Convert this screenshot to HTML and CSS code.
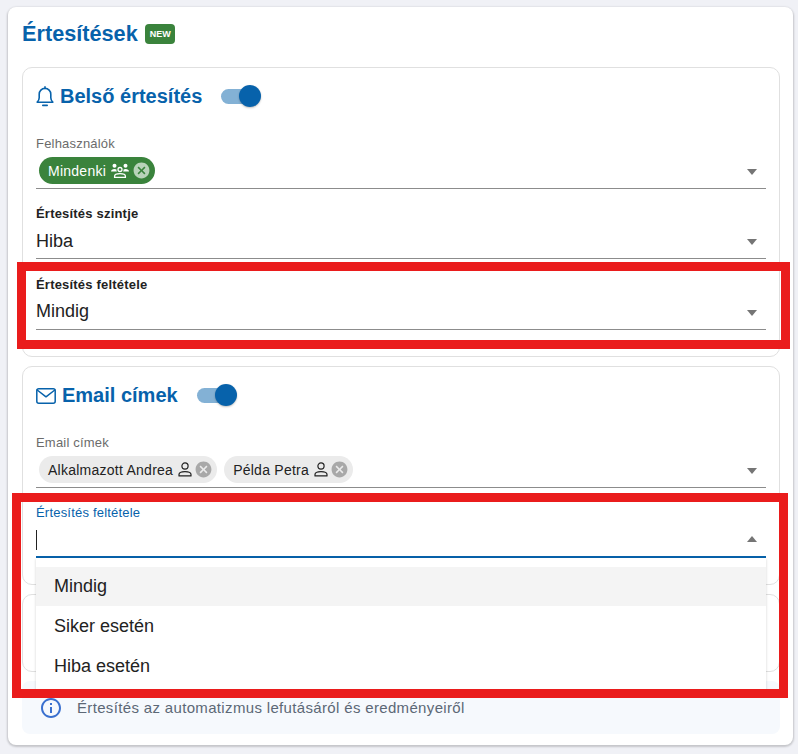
FILE: index.html
```html
<!DOCTYPE html>
<html lang="hu">
<head>
  <meta charset="UTF-8" />
  <title>Értesítések</title>
  <link rel="stylesheet" href="styles.css">
</head>
<body>
  <div class="card">
    <div class="card-title">
      <h1>Értesítések</h1>
      <span class="badge-new">NEW</span>
    </div>

    <!-- Belső értesítés -->
    <section class="section section-inner">
      <div class="section-head">
        <svg class="head-icon bell" viewBox="0 0 18 21" fill="none" stroke="#0762ab" stroke-width="1.600" stroke-linejoin="round" stroke-linecap="round">
          <path d="M1.200 16.200c1.300-1.200 2-2.500 2-4.400V8.200C3.200 4.900 5.700 2.400 9 2.400s5.800 2.500 5.800 5.800v3.600c0 1.900.7 3.200 2 4.400z"/>
          <path d="M9 .9v1.300M6.800 19.400h4.400" />
        </svg>
        <h2>Belső értesítés</h2>
        <span class="switch switch-inner"><span class="switch-knob"></span></span>
      </div>

      <div class="field">
        <label>Felhasználók</label>
        <div class="field-box">
          <span class="chip chip-green">
            Mindenki
            <svg class="chip-group" viewBox="0 0 18 15" fill="#fff">
              <circle cx="3.500" cy="2.800" r="2"/>
              <circle cx="14.500" cy="2.800" r="2"/>
              <path d="M0 8.500c0-1.500 1.500-2.600 3.500-2.600.8 0 1.500.2 2 .5-.2.8 0 1.500.5 2.100H0zM18 8.500c0-1.500-1.500-2.600-3.500-2.600-.8 0-1.500.2-2 .5.2.8 0 1.500-.5 2.100h6z"/>
              <circle cx="9" cy="6.500" r="2" fill="none" stroke="#fff" stroke-width="1.300"/>
              <path d="M3.600 14.300v-1.100c0-1.500 2.500-2.500 5.400-2.500s5.400 1 5.400 2.500v1.100z" fill="none" stroke="#fff" stroke-width="1.300"/>
            </svg>
            <svg class="chip-del" viewBox="0 0 24 24" fill="#b9d3ba"><path d="M12 2C6.470 2 2 6.470 2 12s4.470 10 10 10 10-4.470 10-10S17.530 2 12 2zm5 13.590L15.590 17 12 13.410 8.410 17 7 15.590 10.590 12 7 8.410 8.410 7 12 10.590 15.590 7 17 8.410 13.410 12 17 15.590z"/></svg>
          </span>
          <span class="arrow"></span>
        </div>
      </div>

      <div class="field field-filled">
        <label>Értesítés szintje</label>
        <div class="field-box">
          <span class="value">Hiba</span>
          <span class="arrow"></span>
        </div>
      </div>

      <div class="field field-filled field-last">
        <label>Értesítés feltétele</label>
        <div class="field-box">
          <span class="value">Mindig</span>
          <span class="arrow"></span>
        </div>
      </div>
    </section>

    <!-- Email címek -->
    <section class="section section-email">
      <div class="section-head">
        <svg class="head-icon envelope" viewBox="0 0 20 16" fill="none" stroke="#0762ab" stroke-width="1.500" stroke-linejoin="round" stroke-linecap="round">
          <rect x="0.800" y="0.800" width="18.400" height="14.400" rx="2"/>
          <path d="M1.200 2l8.800 6.800L18.800 2"/>
        </svg>
        <h2>Email címek</h2>
        <span class="switch switch-email"><span class="switch-knob"></span></span>
      </div>

      <div class="field">
        <label>Email címek</label>
        <div class="field-box">
          <span class="chip">
            Alkalmazott Andrea
            <svg class="chip-icon" viewBox="0 0 14 15" fill="none" stroke="#222" stroke-width="1.200"><circle cx="7" cy="4" r="3.100"/><path d="M1 13.900v-1.300c0-1.900 3-3 6-3s6 1.100 6 3v1.300z" stroke-linejoin="round"/></svg>
            <svg class="chip-del" viewBox="0 0 24 24" fill="#a8a8a8"><path d="M12 2C6.470 2 2 6.470 2 12s4.470 10 10 10 10-4.470 10-10S17.530 2 12 2zm5 13.590L15.590 17 12 13.410 8.410 17 7 15.590 10.590 12 7 8.410 8.410 7 12 10.590 15.590 7 17 8.410 13.410 12 17 15.590z"/></svg>
          </span>
          <span class="chip">
            Példa Petra
            <svg class="chip-icon" viewBox="0 0 14 15" fill="none" stroke="#222" stroke-width="1.200"><circle cx="7" cy="4" r="3.100"/><path d="M1 13.900v-1.300c0-1.900 3-3 6-3s6 1.100 6 3v1.300z" stroke-linejoin="round"/></svg>
            <svg class="chip-del" viewBox="0 0 24 24" fill="#a8a8a8"><path d="M12 2C6.470 2 2 6.470 2 12s4.470 10 10 10 10-4.470 10-10S17.530 2 12 2zm5 13.590L15.590 17 12 13.410 8.410 17 7 15.590 10.590 12 7 8.410 8.410 7 12 10.590 15.590 7 17 8.410 13.410 12 17 15.590z"/></svg>
          </span>
          <span class="arrow"></span>
        </div>
      </div>

      <div class="field field-open">
        <label>Értesítés feltétele</label>
        <div class="field-box">
          <span class="cursor"></span>
          <span class="arrow arrow-up"></span>
        </div>
        <ul class="menu">
          <li class="menu-item active">Mindig</li>
          <li class="menu-item">Siker esetén</li>
          <li class="menu-item">Hiba esetén</li>
        </ul>
      </div>
    </section>

    <section class="section section-empty"></section>

    <div class="info-box">
      <svg class="info-icon" viewBox="2 2 20 20" fill="#3a70cf"><path d="M11 7h2v2h-2zm0 4h2v6h-2zm1-9C6.480 2 2 6.480 2 12s4.480 10 10 10 10-4.480 10-10S17.520 2 12 2zm0 18c-4.410 0-8-3.590-8-8s3.590-8 8-8 8 3.590 8 8-3.590 8-8 8z"/></svg>
      <span>Értesítés az automatizmus lefutásáról és eredményeiről</span>
    </div>

    <!-- piros jelölések a kép fölött -->
    <div class="mark mark-top"></div>
    <div class="mark mark-bottom"></div>
  </div>
</body>
</html>
```

FILE: styles.css
```css
html, body {
  overflow: hidden;
}

body {
  margin: 0;
  height: 754px;
  box-sizing: border-box;
  padding: 7px 5px 0 8px;
  background-color: #f0f1f6;
  font-family: "Liberation Sans", Arial, sans-serif;
  color: #222;
}

.card {
  position: relative;
  height: 738px;
  box-sizing: border-box;
  padding: 0 13px 0 14px;
  background-color: #fff;
  border-radius: 8px;
  box-shadow: 0 1px 2px 1px rgba(0, 0, 0, 0.18);
}

.card-title {
  display: flex;
  align-items: center;
  gap: 7px;
  height: 60px;
  padding-bottom: 6px;
  box-sizing: border-box;
}

h1 {
  margin: 0;
  font-size: 21.700px;
  font-weight: 700;
  color: #0762ab;
}

.badge-new {
  padding: 0 4px 0 5px;
  height: 20px;
  line-height: 20px;
  font-size: 9px;
  font-weight: 700;
  color: #fff;
  background-color: #3a833c;
  border-radius: 4px;
}

.section {
  box-sizing: border-box;
  margin-bottom: 9px;
  padding: 0 13px;
  border: 1px solid #e0e0e0;
  border-radius: 10px;
}

.section-inner {
  height: 290px;
}

.section-email {
  height: 219px;
}

.section-empty {
  height: 78px;
}

.section-head {
  display: flex;
  align-items: center;
  height: 57px;
}

h2 {
  margin: 0;
  font-size: 20px;
  font-weight: 700;
  color: #0762ab;
}

.head-icon {
  flex: none;
  margin-right: 6px;
}

.bell {
  width: 18px;
  height: 21px;
}

.envelope {
  width: 20px;
  height: 16px;
}

.switch {
  position: relative;
  flex: none;
  width: 36px;
  height: 15px;
  background-color: #83b1d5;
  border-radius: 8px;
}

.switch-inner {
  margin-left: 19px;
}

.switch-email {
  margin-left: 19px;
}

.switch-knob {
  position: absolute;
  top: -4px;
  right: -4px;
  width: 22px;
  height: 22px;
  background-color: #0762ab;
  border-radius: 50%;
  box-shadow: 0 1px 2px rgba(0, 0, 0, 0.25);
}

.field {
  position: relative;
  margin-top: 10px;
}

.field + .field {
  margin-top: 16px;
}

.field + .field-last {
  margin-top: 17px;
}

label {
  display: block;
  font-size: 13px;
  line-height: 18px;
  color: #6b6b6b;
  letter-spacing: 0.2px;
}

.field-filled label {
  font-weight: 700;
  color: #222;
}

.field-open label {
  color: #0762ab;
}

.field-box {
  display: flex;
  align-items: center;
  gap: 7px;
  position: relative;
  box-sizing: border-box;
  height: 36px;
  padding: 0 3px;
  border-bottom: 1px solid #8c8c8c;
}

.field-filled .field-box {
  padding: 1px 0 0;
}

.field-last .field-box {
  padding: 0;
}

.field-open .field-box {
  padding: 2px 0 0;
  border-bottom: 2px solid #0762ab;
}

.value {
  font-size: 18px;
  color: #222;
}

.cursor {
  width: 1px;
  height: 20px;
  background-color: #222;
}

.arrow {
  position: absolute;
  right: 9px;
  top: 50%;
  margin-top: -2px;
  border-left: 5.500px solid transparent;
  border-right: 5.500px solid transparent;
  border-top: 6px solid #757575;
}

.arrow-up {
  margin-top: -3px;
  border-top: 0;
  border-bottom: 6px solid #757575;
}

.chip {
  display: inline-flex;
  align-items: center;
  height: 27px;
  padding: 0 4px 0 9px;
  font-size: 14px;
  letter-spacing: 0.25px;
  white-space: nowrap;
  color: #222;
  background-color: #ebebeb;
  border-radius: 14px;
}

.chip-green {
  color: #fff;
  background-color: #3a833c;
}

.chip-icon {
  width: 14px;
  height: 15px;
  margin: 0 2px 0 5px;
}

.chip-group {
  width: 18px;
  height: 15px;
  margin: 0 3px 0 5px;
}

.chip-del {
  width: 19px;
  height: 19px;
}

.menu {
  position: absolute;
  z-index: 2;
  left: 0;
  right: 0;
  top: 54px;
  margin: 0;
  padding: 9px 0 8px;
  list-style: none;
  background-color: #fff;
  border-radius: 0 0 4px 4px;
  box-shadow: 0 1px 3px rgba(0, 0, 0, 0.18);
}

.menu-item {
  height: 40px;
  line-height: 40px;
  padding-left: 18px;
  font-size: 18px;
  color: #222;
}

.menu-item.active {
  height: 39px;
  line-height: 38px;
  background-color: #f4f4f4;
}

.info-box {
  display: flex;
  align-items: center;
  gap: 16px;
  height: 53px;
  padding: 0 19px;
  background-color: #f6f9fd;
  border-radius: 8px;
  font-size: 15px;
  letter-spacing: 0.34px;
  color: #5c6876;
}

.info-icon {
  flex: none;
  width: 20px;
  height: 20px;
}

/* red marks lie over the form */
.mark {
  position: absolute;
  z-index: 3;
  box-sizing: border-box;
  border: 9px solid #ea1c1c;
}

.mark-top {
  left: 9px;
  top: 255px;
  width: 773px;
  height: 87px;
}

.mark-bottom {
  left: 4px;
  top: 486px;
  width: 776px;
  height: 205px;
}
```
